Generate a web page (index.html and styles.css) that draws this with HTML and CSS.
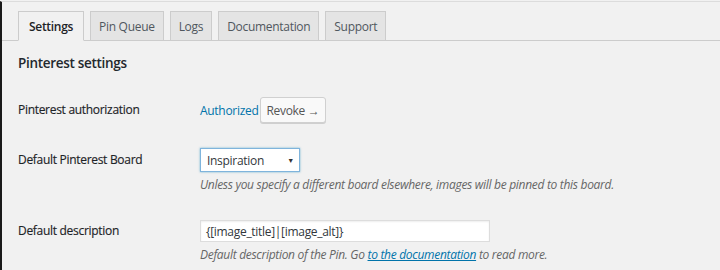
FILE: index.html
```html
<!DOCTYPE html>
<html lang="en">
<head>
<meta charset="utf-8">
<title>Pinterest settings</title>
<link rel="stylesheet" href="styles.css">
</head>
<body>
<div class="page">
  <nav class="tabs">
    <a class="tab active">Settings</a>
    <a class="tab">Pin Queue</a>
    <a class="tab">Logs</a>
    <a class="tab">Documentation</a>
    <a class="tab">Support</a>
  </nav>
  <h2 class="heading">Pinterest settings</h2>
  <div class="form">
    <div class="row row-auth">
      <div class="label">Pinterest authorization</div>
      <div class="field">
        <div class="auth">
          <a class="link">Authorized</a>
          <span class="button">Revoke →</span>
        </div>
      </div>
    </div>
    <div class="row row-board">
      <div class="label label-select">Default Pinterest Board</div>
      <div class="field">
        <div class="select"><span>Inspiration</span><span class="arrow">▼</span></div>
        <p class="desc">Unless you specify a different board elsewhere, images will be pinned to this board.</p>
      </div>
    </div>
    <div class="row row-desc">
      <div class="label label-input">Default description</div>
      <div class="field">
        <div class="input">{[image_title]|[image_alt]}</div>
        <p class="desc">Default description of the Pin. Go <a class="doc">to the documentation</a> to read more.</p>
      </div>
    </div>
  </div>
</div>
</body>
</html>
```
FILE: styles.css
```css
html, body {
  margin: 0;
  padding: 0;
}
body {
  width: 720px;
  height: 270px;
  overflow: hidden;
  background: #f1f1f1;
  font-family: "Open Sans", "Noto Sans", sans-serif;
  color: #23282d;
  letter-spacing: -0.3px;
}
.page {
  box-sizing: border-box;
  height: 270px;
  border-left: 2px solid #1a1a1a;
  border-top: 1px solid #dcdcdc;
  margin-top: 1px;
  padding-left: 16px;
}
.tabs {
  display: flex;
  gap: 6px;
  margin-top: 9px;
  margin-left: -16px;
  padding-left: 16px;
  border-bottom: 1px solid #cccccc;
  height: 29px;
  align-items: flex-end;
}
.tab {
  box-sizing: border-box;
  height: 30px;
  margin-bottom: -1px;
  padding: 0 8px;
  display: flex;
  align-items: center;
  font-size: 12px;
  font-weight: 400;
  color: #50575e;
  background: #e4e4e4;
  border: 1px solid #cccccc;
}
.tab.active {
  background: #f1f1f1;
  color: #1d2327;
  font-weight: 600;
  padding: 0 10px;
  border-bottom-color: #f1f1f1;
}
.heading {
  margin: 12px 0 0;
  font-size: 13.5px;
  line-height: 20px;
  font-weight: 600;
  color: #23282d;
}
.row {
  display: grid;
  grid-template-columns: 182px 1fr;
}
.row-auth { margin-top: 24px; }
.row-board { margin-top: 25px; }
.row-desc { margin-top: 26px; }
.label {
  font-size: 12px;
  font-weight: 400;
  line-height: 26px;
  color: #1d2327;
  -webkit-text-stroke: 0.15px #1d2327;
}
.label-select { line-height: 24px; }
.label-input { line-height: 22px; }
.auth {
  display: flex;
  align-items: center;
  gap: 2px;
}
.link {
  color: #0073aa;
  font-size: 12px;
}
.button {
  box-sizing: border-box;
  height: 26px;
  padding: 0 5px;
  display: flex;
  align-items: center;
  font-size: 12px;
  background: #f9f9f9;
  border: 1px solid #d0d0d0;
  border-radius: 3px;
  box-shadow: 0 1px 0 #cfcfcf;
  color: #555;
}
.select {
  box-sizing: border-box;
  width: 100px;
  height: 24px;
  padding: 0 5px 0 6px;
  display: flex;
  align-items: center;
  justify-content: space-between;
  background: #fff;
  border: 1px solid #7fb4dc;
  box-shadow: 0 0 2px rgba(30, 140, 190, 0.6);
  font-size: 12px;
  color: #32373c;
}
.arrow {
  font-size: 7px;
  color: #333;
}
.input {
  box-sizing: border-box;
  width: 290px;
  height: 22px;
  padding: 0 5px;
  display: flex;
  align-items: center;
  background: #fff;
  border: 1px solid #dddddd;
  box-shadow: inset 0 1px 2px rgba(0, 0, 0, 0.07);
  font-size: 12px;
  color: #32373c;
}
.desc {
  margin: 4px 0 0;
  font-size: 12px;
  line-height: 18px;
  font-style: italic;
  color: #666;
}
.doc {
  color: #0073aa;
  text-decoration: underline;
}
```
